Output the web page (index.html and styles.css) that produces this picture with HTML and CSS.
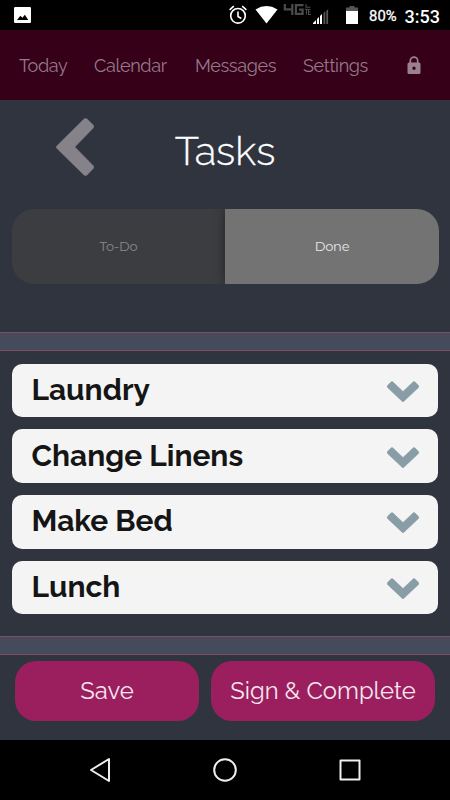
FILE: index.html
```html
<!DOCTYPE html>
<html lang="en">
<head>
<meta charset="utf-8">
<title>Tasks</title>
<link rel="stylesheet" href="styles.css">
</head>
<body>
<svg class="defs" width="0" height="0" aria-hidden="true">
  <symbol id="chevron" viewBox="0 0 32 21"><path d="M.5 4.400 4 1Q5 .2 6 1L16 10.600 26 1Q27 .2 28 1L31.500 4.400Q32.300 5.400 31.500 6.400L16.700 20.400Q16 21 15.300 20.400L.5 6.400Q-.3 5.400.5 4.400Z"/></symbol>
</svg>
<div class="status">
  <svg viewBox="0 0 450 30" width="450" height="30" aria-hidden="true">
    <rect x="14" y="7" width="17" height="16" rx="1.2" fill="#fff"/>
    <path d="M17 20l3.4-4.3 2 2 2.5-3L28.2 20z"/>
    <g fill="none" stroke="#fff" stroke-width="1.6">
      <circle cx="238" cy="15.800" r="7.300"/>
      <path d="M238 11.500v5l3.300 2M229.600 9.800l4.200-3.600M246.400 9.800l-4.200-3.600"/>
    </g>
    <path d="M255.500 9.400Q266.500 2.500 277.500 9.400L266.500 23.600Z" fill="#fff"/>
    <g fill="none" stroke="#4b4b4b" stroke-width="2.200">
      <path d="M284.800 4v5.400h8M292.300 4v11M303.500 5.100h-7.600v8.800h6.700v-4.300h-3.600"/>
      <path d="M306 4v3.300h4.500M304.800 9.300h3.400M306.500 9v5.500M310.500 9.500h-2v5h2.500M308.500 12h2" stroke-width="1.100"/>
    </g>
    <path d="M313 24v-1l3-3v4zM317 24v-5l2-2v7zM320 24v-8l2-2v10z" fill="#fff"/>
    <path d="M323.500 24V13l1.800-2v13zM326.300 24V11l1.800-2v15z" fill="#555"/>
    <path d="M346 11V7.500h3.500V6h5v1.500h3.500V11z" fill="#555"/>
    <path d="M346 11h12v13h-12z" fill="#fff"/>
  </svg>
  <div class="readings"><span class="battery">80%</span><span class="clock">3:53</span></div>
</div>
<nav class="menu">
  <a class="today">Today</a><a class="calendar">Calendar</a><a class="messages">Messages</a><a class="settings">Settings</a>
  <svg class="lock" viewBox="0 0 14 19" width="14" height="19"><path fill="none" stroke="#9b8090" stroke-width="1.700" d="M3.300 7.500V4.800a3.700 3.700 0 0 1 7.400 0v2.700"/><path fill="#9b8090" fill-rule="evenodd" d="M2 6.500h10q1.500 0 1.500 1.500v8.500q0 1.500-1.500 1.500H2Q.5 18 .5 16.500V8Q.5 6.500 2 6.500ZM7 10.500a1.700 1.700 0 1 0 0 3.400 1.700 1.700 0 0 0 0-3.400Z"/></svg>
</nav>
<main>
  <header>
    <svg class="back" viewBox="0 0 38 58" width="38" height="58"><path d="M.8 28 28 1Q29.500-.2 31 1L37.200 7Q38.300 8.500 37.200 10L18.800 29 37.200 47.700Q38.300 49.200 37.200 50.600L31 57Q29.500 58.200 28 57L.8 30.300Q-.2 29.200.8 28Z"/></svg>
    <h1>Tasks</h1>
  </header>
  <div class="tabs"><div class="tab">To-Do</div><div class="tab active">Done</div></div>
  <div class="band"></div>
  <section class="list">
    <div class="card"><span>Laundry</span><svg><use href="#chevron"/></svg></div>
    <div class="card"><span>Change Linens</span><svg><use href="#chevron"/></svg></div>
    <div class="card"><span>Make Bed</span><svg><use href="#chevron"/></svg></div>
    <div class="card"><span>Lunch</span><svg><use href="#chevron"/></svg></div>
  </section>
  <div class="band"></div>
  <div class="actions"><button class="save">Save</button><button class="sign">Sign &amp; Complete</button></div>
</main>
<footer>
  <svg viewBox="0 0 450 60" width="450" height="60" fill="none" stroke="#eee" stroke-width="2" stroke-linejoin="round"><path d="M109 19v22L91 30Z"/><circle cx="225" cy="30" r="10.800"/><rect x="340.500" y="20.500" width="19" height="19"/></svg>
</footer>
</body>
</html>
```
FILE: styles.css
```css
* { box-sizing: border-box; }
body { margin: 0; width: 450px; height: 800px; overflow: hidden; background: #000; font-family: Raleway, Lato, sans-serif; font-weight: 300; }
.defs { display: block; height: 0; }
.status { height: 30px; display: grid; color: #fff; font-family: Roboto, sans-serif; }
.status > * { grid-area: 1 / 1; }
.readings { display: flex; align-items: center; justify-content: flex-end; gap: 8px; padding: 2px 10px 0 0; }
.battery { font-size: 14.800px; font-weight: 400; -webkit-text-stroke: .3px #fff; }
.clock { font-size: 18px; font-weight: 500; }
.menu { height: 70px; background: #360018; color: #957989; display: flex; align-items: center; padding-left: 19px; font-size: 18px; font-weight: 400; letter-spacing: -.35px; white-space: nowrap; }
.menu a { flex: none; }
.today { width: 75px; }
.calendar { width: 101px; }
.messages { width: 108px; }
.settings { width: 104px; }
.lock { flex: none; }
main { height: 640px; background: #30343f; }
header { height: 109px; display: grid; }
header > * { grid-area: 1 / 1; }
.back { margin: 18px 0 0 56px; fill: #85828a; stroke: #85828a; stroke-width: .6px; }
h1 { margin: 27px 0 0; text-align: center; color: #fff; font-size: 40px; line-height: 48px; font-weight: 300; -webkit-text-stroke: .3px #fff; }
.tabs { display: flex; width: 427px; height: 75px; margin: 0 0 48px 12px; border-radius: 22px; overflow: hidden; }
.tab { width: 213px; padding-bottom: 1px; background: #3c3d40; color: #88898b; display: flex; align-items: center; justify-content: center; font-family: Montserrat, Lato, sans-serif; font-size: 13px; font-weight: 400; letter-spacing: -.2px; }
.tab.active { width: 214px; background: #737373; color: #e8e8e8; box-shadow: 0 0 9px #242424; }
.band { height: 19px; background: #454b5b; border: solid #804e64; border-width: 1px 0; }
.list { height: 285px; padding: 12.500px 12px 0; display: flex; flex-direction: column; gap: 12px; }
.card { height: 53.700px; flex: none; border-radius: 10px; background: #f4f4f4; color: #151515; padding: 0 19px 0 19.500px; display: flex; align-items: center; justify-content: space-between; font-size: 29.900px; line-height: 36px; font-weight: 700; }
.card span { white-space: nowrap; padding-bottom: 1px; }
.card svg { width: 32px; height: 21px; fill: #899da6; stroke: #899da6; stroke-width: .6px; margin-top: 2px; }
.actions { display: flex; gap: 12px; padding: 6px 15px 0; }
button { height: 60px; border: 0; border-radius: 21px; padding: 0; background: #9b1f5e; color: #f7e7ef; font: 400 23.800px Raleway, Lato, sans-serif; }
.save { width: 184px; }
.sign { width: 224px; }
footer { height: 60px; background: #000; }
footer svg { display: block; }
```
